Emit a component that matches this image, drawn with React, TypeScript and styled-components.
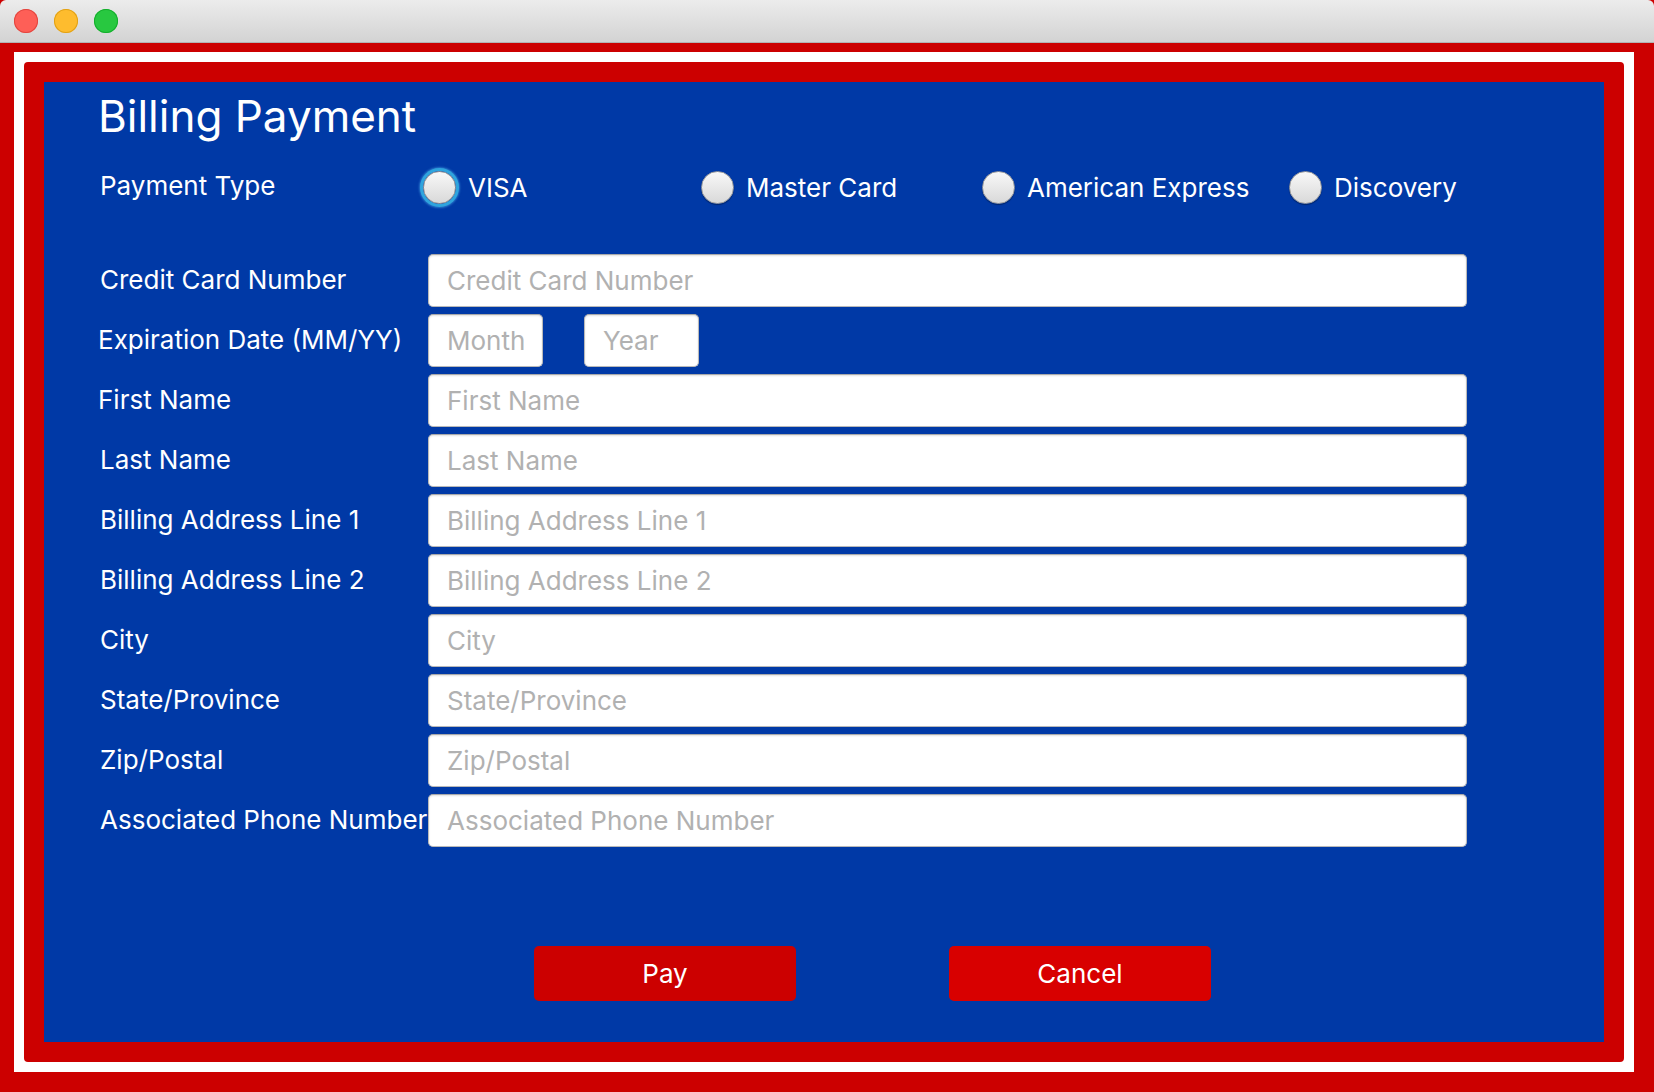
import React from "react";
import styled, { createGlobalStyle } from "styled-components";

const fields = [
  "First Name",
  "Last Name",
  "Billing Address Line 1",
  "Billing Address Line 2",
  "City",
  "State/Province",
  "Zip/Postal",
  "Associated Phone Number",
];

const cards = [
  { name: "VISA", focused: true },
  { name: "Master Card" },
  { name: "American Express" },
  { name: "Discovery" },
];

export default function App() {
  return (
    <Window>
      <GlobalStyle />
      <TitleBar>
        <Light $color="#fe5f57" $edge="#e2463f" />
        <Light $color="#febc2e" $edge="#e1a116" />
        <Light $color="#28c840" $edge="#14ae2c" />
      </TitleBar>
      <Frame>
        <WhiteBorder>
          <RedBorder>
            <Panel>
              <Title>Billing Payment</Title>
              <PaymentRow>
                <PaymentLabel>Payment Type</PaymentLabel>
                <RadioGroup>
                  {cards.map((c) => (
                    <RadioOption key={c.name}>
                      <Radio type="radio" name="card" $focused={!!c.focused} />
                      <span>{c.name}</span>
                    </RadioOption>
                  ))}
                </RadioGroup>
              </PaymentRow>
              <Form>
                <Label>Credit Card Number</Label>
                <Input placeholder="Credit Card Number" />
                <Label $shift>Expiration Date (MM/YY)</Label>
                <DateRow>
                  <SmallInput placeholder="Month" />
                  <SmallInput placeholder="Year" />
                </DateRow>
                {fields.map((f) => (
                  <React.Fragment key={f}>
                    <Label $shift={f === "First Name"}>{f}</Label>
                    <Input placeholder={f} />
                  </React.Fragment>
                ))}
              </Form>
              <ButtonRow>
                <Button>Pay</Button>
                <Button $bright>Cancel</Button>
              </ButtonRow>
            </Panel>
          </RedBorder>
        </WhiteBorder>
      </Frame>
    </Window>
  );
}

// Styled Components
const GlobalStyle = createGlobalStyle`
  html, body {
    margin: 0;
    padding: 0;
    background: #cc0000;
    overflow: hidden;
  }
  body {
    font-family: "Inter", "Liberation Sans", sans-serif;
  }
`;

const Window = styled.div`
  width: 1654px;
  height: 1092px;
  display: flex;
  flex-direction: column;
`;

const TitleBar = styled.div`
  height: 42px;
  flex: none;
  display: flex;
  align-items: center;
  gap: 16px;
  padding-left: 14px;
  background: linear-gradient(#ececec, #d3d3d3);
  border-bottom: 1px solid #b3b3b3;
  border-radius: 6px 6px 0 0;
`;

const Light = styled.span<{ $color: string; $edge: string }>`
  width: 24px;
  height: 24px;
  border-radius: 50%;
  background: ${(p) => p.$color};
  box-shadow: inset 0 0 0 1px ${(p) => p.$edge};
`;

const Frame = styled.div`
  flex: 1;
  display: flex;
  background: #cc0000;
  padding: 9px 20px 20px 14px;
`;

const WhiteBorder = styled.div`
  flex: 1;
  display: flex;
  background: #fff;
  padding: 10px;
`;

const RedBorder = styled.div`
  flex: 1;
  display: flex;
  background: #cc0000;
  border-radius: 4px;
  padding: 20px;
`;

const Panel = styled.div`
  flex: 1;
  display: flex;
  flex-direction: column;
  background: #0039a6;
  padding-left: 56px;
  color: #fff;
`;

const Title = styled.h1`
  margin: 10px 0 0 -2px;
  font-size: 44px;
  line-height: 48px;
  font-weight: 400;
`;

const PaymentRow = styled.div`
  display: flex;
  align-items: center;
  height: 40px;
  margin-top: 27px;
`;

const PaymentLabel = styled.div`
  width: 322px;
  font-size: 26px;
  padding-bottom: 4px;
`;

const RadioGroup = styled.div`
  display: grid;
  grid-template-columns: 278px 281px 307px auto;
`;

const RadioOption = styled.label`
  display: flex;
  align-items: center;
  gap: 12px;
  font-size: 26px;
`;

const Radio = styled.input<{ $focused: boolean }>`
  appearance: none;
  margin: 0 0 0 1px;
  width: 33px;
  height: 33px;
  border-radius: 50%;
  background: linear-gradient(#f8f8f8, #d9d9d9);
  border: 1px solid #9c9c9c;
  box-shadow: ${(p) =>
    p.$focused
      ? "0 0 0 3px #2fa4dd, 0 0 2px 4px rgba(80, 180, 240, 0.5)"
      : "0 1px 1px rgba(0, 0, 0, 0.35)"};
`;

const Form = styled.div`
  display: grid;
  grid-template-columns: 328px 1039px;
  grid-auto-rows: 53px;
  row-gap: 7px;
  margin-top: 47px;
`;

const Label = styled.div<{ $shift?: boolean }>`
  display: flex;
  align-items: center;
  font-size: 26px;
  padding-bottom: 3px;
  margin-left: ${(p) => (p.$shift ? "-2px" : "0")};
  white-space: nowrap;
`;

const Input = styled.input`
  box-sizing: border-box;
  height: 53px;
  width: 100%;
  margin: 0;
  padding: 0 18px;
  border: 1px solid #b9b9b9;
  border-top-color: #a9a9a9;
  border-radius: 5px;
  background: #fff;
  box-shadow: inset 0 1px 2px rgba(0, 0, 0, 0.12);
  font-family: inherit;
  font-size: 26px;
  color: #222;
  outline: none;

  &::placeholder {
    color: #b1b1b1;
  }
`;

const DateRow = styled.div`
  display: flex;
  gap: 41px;
`;

const SmallInput = styled(Input)`
  width: 115px;
`;

const ButtonRow = styled.div`
  display: flex;
  gap: 153px;
  margin: 99px 0 0 434px;
`;

const Button = styled.button<{ $bright?: boolean }>`
  width: 262px;
  height: 55px;
  border: none;
  border-radius: 5px;
  background: ${(p) => (p.$bright ? "#d80000" : "#cc0000")};
  color: #fff;
  font-family: inherit;
  font-size: 26px;
  cursor: pointer;
`;
